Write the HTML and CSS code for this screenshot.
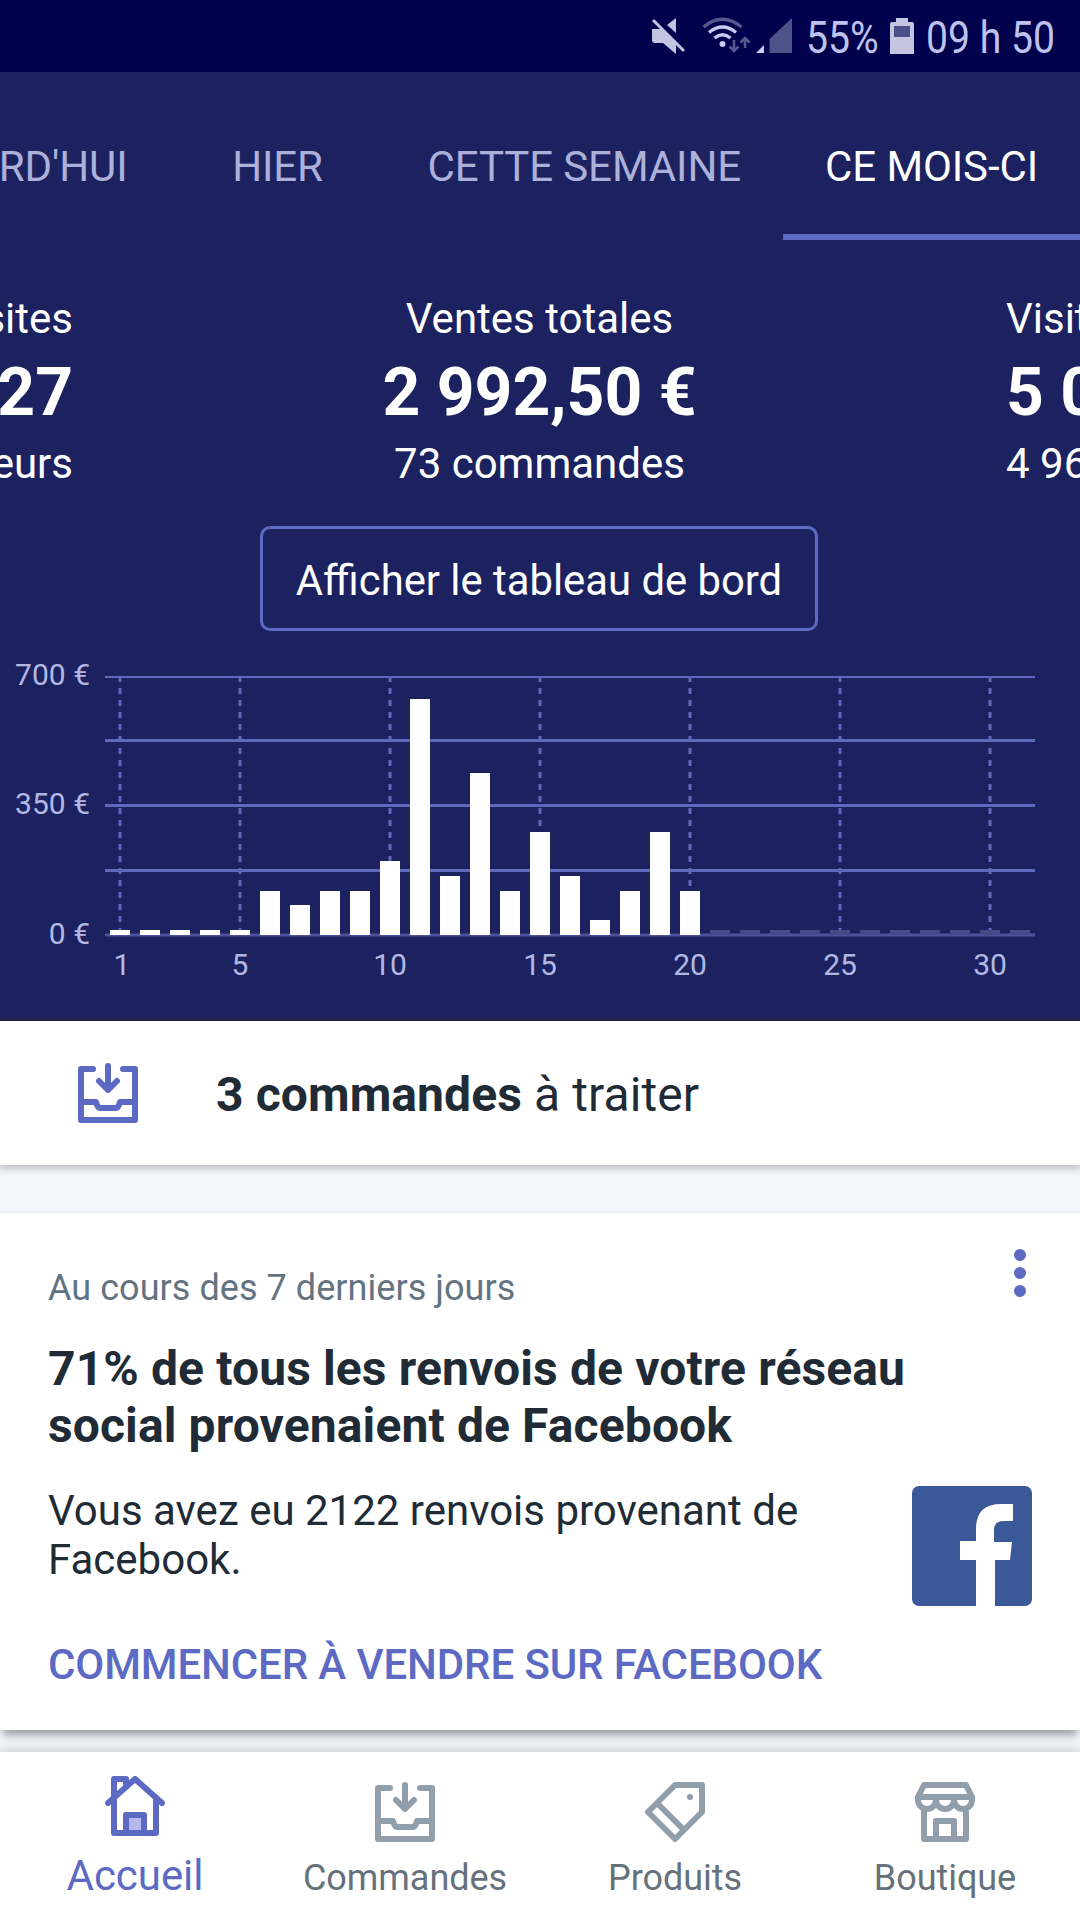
FILE: index.html
```html
<!DOCTYPE html>
<html lang="fr">
<head>
    <meta charset="UTF-8">
    <meta name="viewport" content="width=device-width, initial-scale=1.0">
    <title>Accueil</title>
    <link rel="stylesheet" href="styles.css">
</head>
<body>
    <div class="status-bar">
        <svg class="status-icons" width="152" height="72" viewBox="640 0 152 72">
            <!-- sound off -->
            <path fill="#c3c4e0" d="M652 29h9l2 1 13 14v10l-13-11h-9l-2-2zM676 18v15l-9-8z"/>
            <path stroke="#c3c4e0" stroke-width="3" d="M653 20l31 31"/>
            <!-- wifi -->
            <g fill="none" stroke-width="3.2">
                <path stroke="#56588f" d="M703.500 27q19-15.500 38 0"/>
                <path stroke="#c8caf0" d="M709 32.500q13.500-11 27 0M714.500 38q8-6.500 16 0"/>
                <path stroke="#56588f" stroke-width="2.600" d="M734 40v11M729.500 46.500l4.500 4.500 4.500-4.500M745 48v-10M740.500 42.500l4.500-4.500 4.500 4.500"/>
            </g>
            <circle cx="722.500" cy="44" r="3" fill="#c8caf0"/>
            <!-- signal -->
            <path fill="#c8caf0" d="M756 53l8-8v8z"/>
            <path fill="#50538a" d="M769.500 53v-14l22.500-21v35z"/>
        </svg>
        <span class="status-text status-battery">55%</span>
        <svg class="battery-icon" width="24" height="36" viewBox="0 0 24 36">
            <path fill="#c3c4e0" d="M6 0h12v4h4q2 0 2 2v30h-24v-30q0-2 2-2h4z"/>
            <path fill="#4c4f8c" d="M4 8h16v11h-16z"/>
        </svg>
        <span class="status-text status-time">09 h 50</span>
    </div>

    <div class="overview">
        <div class="tabs">
            <div class="tab">AUJOURD'HUI</div>
            <div class="tab">HIER</div>
            <div class="tab">CETTE SEMAINE</div>
            <div class="tab active">CE MOIS-CI</div>
        </div>

        <div class="stats">
            <div class="stat stat-prev">
                <div class="stat-label">Visites</div>
                <div class="stat-value">27</div>
                <div class="stat-label">visiteurs</div>
            </div>
            <div class="stat stat-current">
                <div class="stat-label">Ventes totales</div>
                <div class="stat-value">2 992,50 €</div>
                <div class="stat-label">73 commandes</div>
            </div>
            <div class="stat stat-next">
                <div class="stat-label">Visites</div>
                <div class="stat-value">5 0</div>
                <div class="stat-label">4 96</div>
            </div>
        </div>

        <button class="dashboard-button">Afficher le tableau de bord</button>

        <svg class="chart" width="1080" height="387" viewBox="0 631 1080 387">
            <g class="grid">
                <path class="grid-top" d="M105 677h930"/>
                <path d="M105 740.500h930M105 805.500h930M105 870.500h930"/>
                <path class="grid-base" d="M105 935h930"/>
                <path class="grid-days" d="M120 676v258M240 676v258M390 676v258M540 676v258M690 676v258M840 676v258M990 676v258"/>
            </g>
            <g class="bars">
                <rect x="110" y="930" width="20" height="5"/>
                <rect x="140" y="930" width="20" height="5"/>
                <rect x="170" y="930" width="20" height="5"/>
                <rect x="200" y="930" width="20" height="5"/>
                <rect x="230" y="930" width="20" height="5"/>
                <rect x="260" y="891" width="20" height="44"/>
                <rect x="290" y="905" width="20" height="30"/>
                <rect x="320" y="891" width="20" height="44"/>
                <rect x="350" y="891" width="20" height="44"/>
                <rect x="380" y="861" width="20" height="74"/>
                <rect x="410" y="699" width="20" height="236"/>
                <rect x="440" y="876" width="20" height="59"/>
                <rect x="470" y="773" width="20" height="162"/>
                <rect x="500" y="891" width="20" height="44"/>
                <rect x="530" y="832" width="20" height="103"/>
                <rect x="560" y="876" width="20" height="59"/>
                <rect x="590" y="920" width="20" height="15"/>
                <rect x="620" y="891" width="20" height="44"/>
                <rect x="650" y="832" width="20" height="103"/>
                <rect x="680" y="891" width="20" height="44"/>
            </g>
            <!-- days to come -->
            <path class="bars-future" d="M710 932.500h20m10 0h20m10 0h20m10 0h20m10 0h20m10 0h20m10 0h20m10 0h20m10 0h20m10 0h20m10 0h20"/>
            <g class="axis axis-y">
                <text x="90" y="685">700 €</text>
                <text x="90" y="814">350 €</text>
                <text x="90" y="944">0 €</text>
            </g>
            <g class="axis axis-x">
                <text x="122" y="975">1</text>
                <text x="240" y="975">5</text>
                <text x="390" y="975">10</text>
                <text x="540" y="975">15</text>
                <text x="690" y="975">20</text>
                <text x="840" y="975">25</text>
                <text x="990" y="975">30</text>
            </g>
        </svg>
    </div>

    <div class="orders">
        <svg class="icon" width="60" height="60" viewBox="0 0 60 60">
            <path d="M15 6H3v51h54V6H45M3 39h15q1.500 6 4 6h16q2.500 0 4-6h15M30 3v24M21 18l9 9 9-9"/>
        </svg>
        <div class="orders-text"><b>3 commandes</b> à traiter</div>
    </div>

    <div class="card">
        <svg class="card-menu" width="12" height="48" viewBox="0 0 12 48">
            <circle cx="6" cy="6" r="6"/>
            <circle cx="6" cy="24" r="6"/>
            <circle cx="6" cy="42" r="6"/>
        </svg>
        <div class="card-period">Au cours des 7 derniers jours</div>
        <h2>71% de tous les renvois de votre réseau social provenaient de Facebook</h2>
        <div class="card-body">
            <p>Vous avez eu 2122 renvois provenant de Facebook.</p>
            <svg width="120" height="120" viewBox="0 0 120 120">
                <rect width="120" height="120" rx="7" fill="#3b5998"/>
                <path fill="#fff" d="M64 120V74H48V55h16V43q0-25 25-25h12v17h-9q-10 0-10 9v12h18l-2 18H83v46z"/>
            </svg>
        </div>
        <a class="card-action">COMMENCER À VENDRE SUR FACEBOOK</a>
    </div>

    <div class="nav">
        <div class="nav-item active">
            <svg class="icon" width="60" height="60" viewBox="0 0 60 60">
                <path d="M9 24V3h12v6M3 27L30 3l27 24M9 22v35h42V22"/>
                <path class="door" d="M21 57V39h18v18z"/>
            </svg>
            <span>Accueil</span>
        </div>
        <div class="nav-item">
            <svg class="icon" width="60" height="60" viewBox="0 0 60 60">
                <path d="M15 6H3v51h54V6H45M3 39h15q1.500 6 4 6h16q2.500 0 4-6h15M30 3v24M21 18l9 9 9-9"/>
            </svg>
            <span>Commandes</span>
        </div>
        <div class="nav-item">
            <svg class="icon" width="60" height="60" viewBox="0 0 60 60">
                <path d="M30 3h27v27L30 57 3 30zM12 21l27 27M45 15h.01"/>
            </svg>
            <span>Produits</span>
        </div>
        <div class="nav-item">
            <svg class="icon" width="60" height="60" viewBox="0 0 60 60">
                <path d="M9 3h42l6 12H3zM3 15v3a9 9 0 0 0 18 0a9 9 0 0 0 18 0a9 9 0 0 0 18 0v-3M9 27v30h42V27M21 57V39h18v18"/>
            </svg>
            <span>Boutique</span>
        </div>
    </div>
</body>
</html>
```

FILE: styles.css
```css
* {
    box-sizing: border-box;
}
body {
    margin: 0;
    width: 1080px;
    height: 1920px;
    overflow: hidden;
    background-color: #f4f6fa;
    font-family: Roboto, sans-serif;
    color: #212b36;
}
.status-bar {
    display: flex;
    height: 72px;
    padding-left: 640px;
    background-color: #00004d;
}
.status-text {
    font-size: 45px;
    line-height: 76px;
    color: #bfc2ec;
    white-space: nowrap;
    transform: scaleX(0.87); /* condensed system font */
    transform-origin: left;
}
.status-battery {
    width: 84px;
    margin-left: 14px;
}
.battery-icon {
    margin-top: 18px;
}
.status-time {
    margin-left: 12px;
}
.overview {
    height: 949px;
    background-color: #1c2260;
    border-bottom: 3px solid #232446;
    color: #fff;
    overflow: hidden;
}
.tabs {
    display: flex;
    justify-content: flex-end;
    height: 168px;
}
.tab {
    flex: none;
    min-width: 216px; /* short labels keep a full-width tab */
    padding: 70px 42px 0;
    font-size: 42px;
    line-height: 50px;
    letter-spacing: -0.1px;
    text-align: center;
    color: #adb1da;
    white-space: nowrap;
}
.tab.active {
    color: #fff;
    border-bottom: 6px solid #5c6ac4;
}
.stats {
    display: grid;
    grid-template-columns: 73px 1fr 74px;
    padding-top: 54px;
    white-space: nowrap;
}
.stat {
    display: flex;
    flex-direction: column;
}
.stat-prev {
    align-items: flex-end;
}
.stat-current {
    align-items: center;
}
.stat-label {
    font-size: 42px;
    line-height: 49px;
}
.stat-value {
    padding-top: 3px;
    font-size: 66px;
    line-height: 93px;
    font-weight: bold;
}
.dashboard-button {
    display: block;
    width: 558px;
    height: 105px;
    margin: 38px 0 0 260px;
    padding: 3px 0 0;
    background: none;
    border: 3px solid #5c6ac4;
    border-radius: 10px;
    font-family: inherit;
    font-size: 41.8px;
    color: #fff;
}
.chart {
    display: block;
}
.grid {
    stroke: #5f69bb;
    stroke-width: 3;
}
.grid-top {
    stroke-width: 2;
}
.grid-base {
    stroke: #4c5199;
}
.grid-days {
    stroke-dasharray: 6 6;
}
.bars {
    fill: #fff;
}
.bars-future {
    stroke: #464a88;
    stroke-width: 5;
}
.axis {
    font-size: 30px;
    fill: #b3b8e3;
}
.axis-y {
    text-anchor: end;
}
.axis-x {
    text-anchor: middle;
}
.icon {
    display: block;
    fill: none;
    stroke: #919eab;
    stroke-width: 6;
    stroke-linecap: round;
    stroke-linejoin: round;
}
.orders {
    display: flex;
    align-items: center;
    gap: 78px;
    height: 144px;
    padding-left: 78px;
    background-color: #fff;
    box-shadow: 0 1px 8px 2px rgba(0, 0, 0, 0.25);
    clip-path: inset(0 0 -14px);
}
.orders .icon {
    stroke: #5c6ac4;
}
.orders-text {
    padding-top: 3px;
    font-size: 48px;
    letter-spacing: 0.1px;
}
.card {
    position: relative;
    height: 519px;
    margin-top: 46px;
    padding: 53px 48px 0;
    background-color: #fff;
    border-top: 2px solid #ebeef3;
    box-shadow: 0 8px 8px -3px rgba(30, 35, 50, 0.42);
}
.card-menu {
    position: absolute;
    top: 36px;
    right: 54px;
    fill: #5c6ac4;
}
.card-period {
    font-size: 36px;
    line-height: 44px;
    letter-spacing: 0.05px;
    color: #637381;
}
.card h2 {
    margin: 30px 0 32px;
    font-size: 48px;
    line-height: 57px;
    letter-spacing: 0.12px;
}
.card-body {
    display: flex;
    justify-content: space-between;
}
.card-body p {
    width: 780px;
    margin: 0;
    font-size: 42px;
    line-height: 49px;
}
.card-action {
    display: block;
    margin-top: 34px;
    font-size: 42px;
    font-weight: 500;
    line-height: 50px;
    letter-spacing: -0.1px;
    color: #5c6ac4;
}
.nav {
    position: relative;
    display: grid;
    grid-template-columns: repeat(4, 1fr);
    height: 168px;
    margin-top: 22px;
    background-color: #fff;
    box-shadow: 0 0 14px rgba(0, 0, 0, 0.22);
}
.nav-item {
    display: flex;
    flex-direction: column;
    align-items: center;
    gap: 14px;
    padding-top: 30px;
    font-size: 36px;
    line-height: 44px;
    letter-spacing: -0.05px;
    color: #66717c;
}
.nav-item.active {
    padding-top: 24px;
    font-size: 42px;
    line-height: 51px;
    color: #5c6ac4;
}
.nav-item.active .icon {
    stroke: #5c6ac4;
}
.door {
    fill: #b4baeb;
}
```
